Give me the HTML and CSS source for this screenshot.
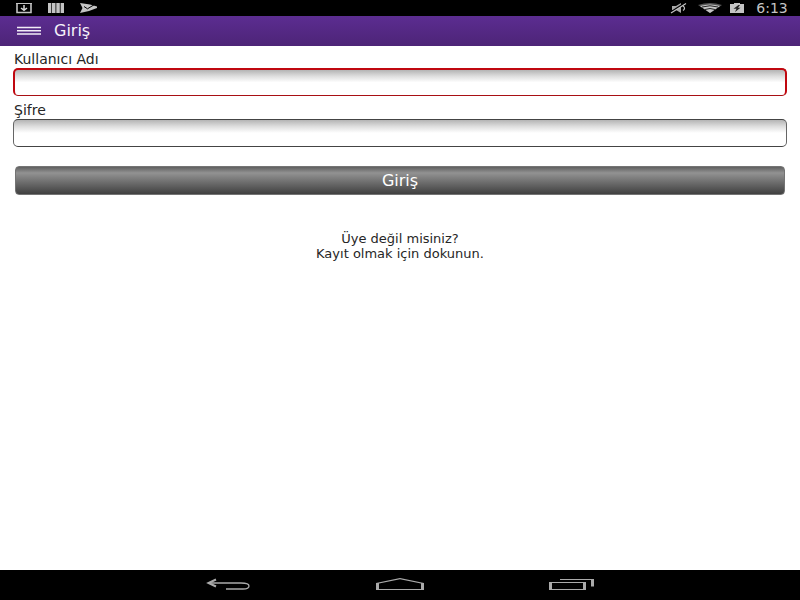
FILE: index.html
```html
<!DOCTYPE html>
<html lang="tr">
<head>
<meta charset="utf-8">
<meta name="viewport" content="width=device-width, initial-scale=1">
<title>Giriş</title>
<link rel="stylesheet" href="styles.css">
</head>
<body>
<div class="status-bar">
  <div class="status-group notifications">
    <svg width="16" height="12" viewBox="0 0 16 12" aria-hidden="true"><path d="M1 1V10.500H15V1" fill="none" stroke="#c4c4c4" stroke-width="1.600"/><path d="M0 1.500H16" stroke="#c4c4c4" stroke-width="1"/><path d="M8 3V7.500M5 6L8 8.400L11 6" fill="none" stroke="#d8d8d8" stroke-width="1.500"/></svg>
    <svg width="16" height="12" viewBox="0 0 16 12" aria-hidden="true"><path d="M0 1H3.300V11H0ZM4 1H7.500V11H4ZM8.300 1H11.800V11H8.300ZM12.600 1H16V11H12.600Z" fill="#c4c4c4"/></svg>
    <svg width="18" height="12" viewBox="0 0 18 12" aria-hidden="true"><path d="M0 1L10 2.500L17 4.500V6L9 9L0 11L2.500 6Z" fill="#c4c4c4"/><path d="M4 4.500L7.500 6.800L14 2.800" fill="none" stroke="#000" stroke-width="1"/></svg>
  </div>
  <div class="status-group system">
    <svg width="18" height="12" viewBox="0 0 18 12" aria-hidden="true"><path d="M2 4H6L11 1V11L6 8H2Z" fill="#a8a8a8"/><path d="M1 10L15 1" stroke="#000" stroke-width="1.500"/><path d="M1 11L16 1.500M13 4Q16 6 13 8.500" fill="none" stroke="#c4c4c4" stroke-width="1.200"/></svg>
    <svg class="wifi" width="24" height="12" viewBox="0 0 24 12" aria-hidden="true"><path d="M0 3Q12-1 24 3L12 11Z" fill="#555"/><path d="M2 4Q12 1 22 4L12 11Z" fill="#c4c4c4"/><path d="M4 5Q12 2.500 20 5M7 7.500Q12 5.500 17 7.500" fill="none" stroke="#222" stroke-width="1"/></svg>
    <svg width="14" height="12" viewBox="0 0 14 12" aria-hidden="true"><path d="M0 2H4V1H10V2H14V11H0Z" fill="#c4c4c4"/><path d="M8.500 3L3.500 6.800H6.500L5 10L10.500 5.800H8L10 3Z" fill="#222"/></svg>
    <span class="clock">6:13</span>
  </div>
</div>
<header class="app-bar">
  <button class="menu-button" type="button" aria-label="Menü">
    <svg width="26" height="10" viewBox="0 0 26 10" aria-hidden="true"><path d="M1 1.500H25M1 4.700H25M1 8H25" stroke="#f2edf6" stroke-width="1.500"/></svg>
  </button>
  <h1 class="title">Giriş</h1>
</header>
<main class="content">
  <form class="login-form">
    <label class="field-label" for="username">Kullanıcı Adı</label>
    <input class="field invalid" id="username" type="text">
    <label class="field-label" for="password">Şifre</label>
    <input class="field" id="password" type="password">
    <button class="submit" type="button">Giriş</button>
  </form>
  <a class="register" href="#register">Üye değil misiniz?<br>Kayıt olmak için dokunun.</a>
</main>
<nav class="nav-bar">
  <button class="nav-button" type="button" aria-label="Geri"><svg width="44" height="14" viewBox="-1 0 44 14" aria-hidden="true"><path d="M1 5H34Q42 5 42 8Q42 11 36 11H19" fill="none" stroke="#aaa" stroke-width="1.300"/><path d="M9 1.500L1.500 5L9 8.500" fill="none" stroke="#aaa" stroke-width="2"/></svg></button>
  <button class="nav-button" type="button" aria-label="Ana ekran"><svg width="48" height="14" viewBox="0 0 48 14" aria-hidden="true"><path d="M0 5L24 0L48 5V12H0ZM3 5.500V11H45V5.500L24 1.200Z" fill="#aaa" fill-rule="evenodd"/></svg></button>
  <button class="nav-button" type="button" aria-label="Son uygulamalar"><svg width="46" height="14" viewBox="0 0 46 14" aria-hidden="true"><path d="M0 4H37V12H0ZM3 5V11H34V5ZM11 1H45V8.500H42V2H11Z" fill="#aaa" fill-rule="evenodd"/></svg></button>
</nav>
</body>
</html>
```
FILE: styles.css
```css
* {
  box-sizing: border-box;
}

body {
  margin: 0;
  min-height: 100vh;
  display: flex;
  flex-direction: column;
  background: #fff;
  color: #262626;
  font: 14px/14px "DejaVu Sans", Roboto, sans-serif;
}

button {
  padding: 0;
  border: 0;
  background: none;
  font: inherit;
}

svg {
  display: block;
}

.status-bar {
  display: flex;
  justify-content: space-between;
  align-items: center;
  height: 16px;
  padding: 0 8px 0 16px;
  background: #000;
}

.status-group {
  display: flex;
  align-items: center;
}

.notifications {
  gap: 16px;
}

.system {
  gap: 8px;
}

.wifi {
  margin-left: 2px;
}

.clock {
  min-width: 40px;
  color: #c4c4c4;
  font-size: 14px;
  text-align: center;
}

.app-bar {
  display: flex;
  align-items: center;
  gap: 12px;
  height: 30px;
  padding: 0 16px;
  background: linear-gradient(#5c2d91, #4d2477);
}

.title {
  margin: 0;
  color: #f6f2fa;
  font-size: 16px;
  font-weight: 400;
  line-height: 20px;
}

.content {
  flex: 1;
  padding: 6px 13px;
}

.login-form {
  display: flex;
  flex-direction: column;
}

.field-label {
  height: 16px;
  padding-left: 1px;
}

.field {
  width: 100%;
  height: 28px;
  margin-bottom: 7px;
  padding: 0 8px;
  border: 1px solid #444;
  border-right-color: #666;
  border-left-color: #666;
  border-radius: 5px;
  outline: 0;
  background: linear-gradient(#b4b4b4, #dedede 25%, #fff 50%);
  font: inherit;
}

.field.invalid {
  border-color: #c00810 #c00810 #a81014;
  border-width: 2px 2px 1px;
}

.submit {
  height: 29px;
  margin: 12px 2px 0;
  border: 1px solid #747474;
  border-radius: 4px;
  background: linear-gradient(#606060, #929292 22%, #404040);
  color: #fff;
  font-size: 16px;
}

.register {
  display: block;
  width: fit-content;
  margin: 36px auto 0;
  color: inherit;
  font-size: 13px;
  line-height: 15px;
  text-align: center;
  text-decoration: none;
}

.nav-bar {
  display: flex;
  justify-content: center;
  align-items: center;
  height: 30px;
  background: #000;
}

.nav-button {
  display: flex;
  justify-content: center;
  width: 172px;
}
```
